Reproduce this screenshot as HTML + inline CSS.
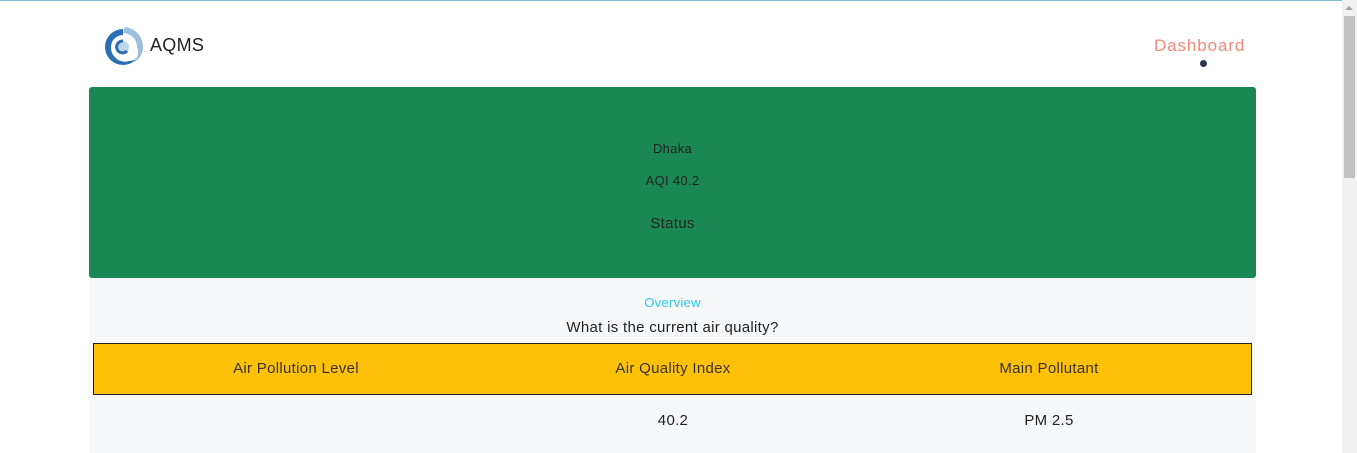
<!DOCTYPE html>
<html><head><style>
*{margin:0;padding:0;box-sizing:border-box}
body{width:1357px;height:453px;overflow:hidden;background:#fff;font-family:"Liberation Sans",sans-serif;position:relative}
.sb{position:absolute;right:0;top:0;width:15px;height:453px;background:#f1f1f1}
.thumb{position:absolute;right:2px;top:16px;width:11px;height:162px;background:#c1c1c1}
.arr{position:absolute;right:4px;top:6px;width:0;height:0;border-left:4px solid transparent;border-right:4px solid transparent;border-bottom:4px solid #a3a3a3}
.t{position:absolute;white-space:nowrap;letter-spacing:0.3px}
</style></head><body>
<div style="position:absolute;left:0;top:0;width:1357px;height:1px;background:#7fbfd0"></div>
<svg style="position:absolute;left:101px;top:25px" width="44" height="44" viewBox="0 0 44 44">
<path d="M22 4 A18 18 0 1 0 40 22 A12 12 0 0 1 28 36 A14 14 0 0 1 10 22 A12 12 0 0 1 22 10Z" fill="#2a6fb5"/>
<path d="M24 2 A20 20 0 0 1 42 22 A16 16 0 0 1 30 38 A12 12 0 0 0 36 22 A14 14 0 0 0 22 8Z" fill="#9cc0e0"/>
<circle cx="22" cy="22" r="6" fill="#bcd6ec"/>
<path d="M22 16 A6 6 0 0 0 16 24 A6 6 0 0 0 26 26" stroke="#2a6fb5" stroke-width="3" fill="none"/>
</svg>
<div class="t" style="left:150px;top:35px;font-size:18px;color:#222">AQMS</div>
<div class="t" style="left:1154px;top:36px;font-size:17px;color:#f08a78;letter-spacing:0.9px">Dashboard</div>
<div style="position:absolute;left:1200px;top:60px;width:7px;height:7px;border-radius:50%;background:#2d3748"></div>
<div style="position:absolute;left:89px;top:87px;width:1167px;height:191px;background:#1a8855;border-radius:3px"></div>
<div class="t" style="left:0;width:1345px;text-align:center;top:141px;font-size:13px;color:#222">Dhaka</div>
<div class="t" style="left:0;width:1345px;text-align:center;top:173px;font-size:13px;color:#222">AQI 40.2</div>
<div class="t" style="left:0;width:1345px;text-align:center;top:215px;font-size:15px;color:#222">Status</div>
<div style="position:absolute;left:89px;top:278px;width:1167px;height:175px;background:#f7f8fa"></div>
<div class="t" style="left:0;width:1345px;text-align:center;top:295px;font-size:13px;color:#2ec6e8">Overview</div>
<div class="t" style="left:0;width:1345px;text-align:center;top:319px;font-size:15px;color:#222">What is the current air quality?</div>
<div style="position:absolute;left:93px;top:343px;width:1159px;height:52px;background:#ffc107;border:1px solid #222"></div>
<div class="t" style="left:93px;width:406px;text-align:center;top:360px;font-size:15px;color:#333">Air Pollution Level</div>
<div class="t" style="left:470px;width:406px;text-align:center;top:360px;font-size:15px;color:#333">Air Quality Index</div>
<div class="t" style="left:846px;width:406px;text-align:center;top:360px;font-size:15px;color:#333">Main Pollutant</div>
<div class="t" style="left:470px;width:406px;text-align:center;top:412px;font-size:15px;color:#222">40.2</div>
<div class="t" style="left:846px;width:406px;text-align:center;top:412px;font-size:15px;color:#222">PM 2.5</div>
<div class="sb"><div class="arr"></div><div class="thumb"></div></div>
</body></html>
